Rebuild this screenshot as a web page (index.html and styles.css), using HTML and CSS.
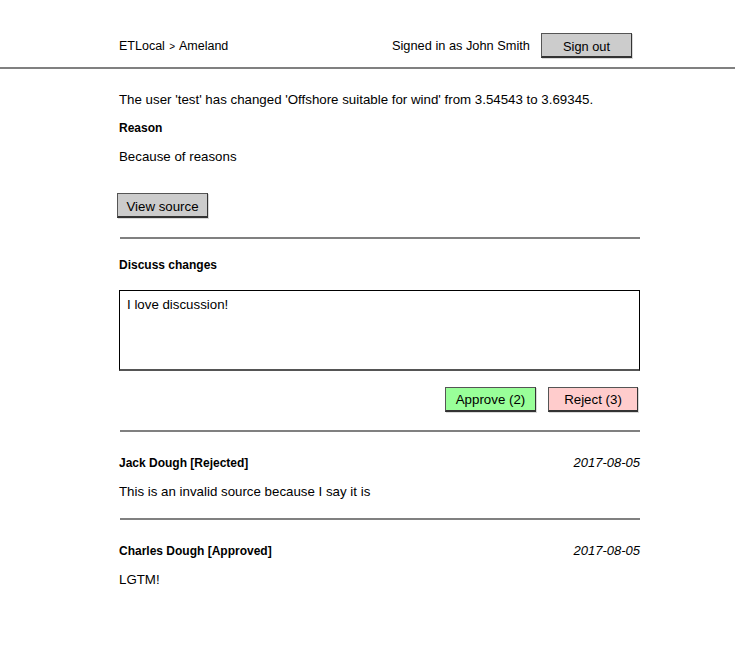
FILE: index.html
```html
<!DOCTYPE html>
<html>
<head>
<meta charset="utf-8">
<link rel="stylesheet" href="styles.css">
</head>
<body>
<header class="topbar">
  <div class="topbar-inner">
    <div class="crumbs">ETLocal <span class="sep">&gt;</span> Ameland</div>
    <div class="user">
      <span class="signed">Signed in as John Smith</span>
      <button class="btn btn-gray signout">Sign out</button>
    </div>
  </div>
</header>
<main class="content">
  <p class="change">The user 'test' has changed 'Offshore suitable for wind' from 3.54543 to 3.69345.</p>
  <p class="label">Reason</p>
  <p class="reason">Because of reasons</p>
  <button class="btn btn-gray viewsrc">View source</button>
  <hr class="rule">
  <p class="label discuss">Discuss changes</p>
  <div class="textarea">I love discussion!</div>
  <div class="actions">
    <button class="btn btn-green">Approve (2)</button>
    <button class="btn btn-red">Reject (3)</button>
  </div>
  <hr class="rule">
  <div class="comment">
    <div class="comment-head"><span class="who">Jack Dough [Rejected]</span><span class="date">2017-08-05</span></div>
    <p class="comment-body">This is an invalid source because I say it is</p>
  </div>
  <hr class="rule">
  <div class="comment">
    <div class="comment-head"><span class="who">Charles Dough [Approved]</span><span class="date">2017-08-05</span></div>
    <p class="comment-body">LGTM!</p>
  </div>
</main>
</body>
</html>
```
FILE: styles.css
```css
* { box-sizing: border-box; }
html, body { margin: 0; padding: 0; background: #fff; }
body {
  font-family: "Liberation Sans", Arial, sans-serif;
  font-size: 13.3px;
  color: #000;
}
.topbar {
  border-bottom: 2px solid #808080;
  height: 69px;
  padding-top: 33px;
}
.topbar-inner {
  width: 521px;
  margin-left: 119px;
  display: flex;
  justify-content: space-between;
  align-items: center;
}
.crumbs { padding-top: 1px; font-size: 12.5px; }
.sep { font-size: 10px; margin: 0 1px; }
.user { display: flex; align-items: center; gap: 11px; margin-right: 8px; font-size: 12.8px; }
.btn {
  font: inherit;
  color: #000;
  border: 1px solid #555;
  border-right-color: #333;
  border-bottom: 2px solid #333;
  height: 25px;
  padding: 0;
  box-shadow: 1px 1px 0 rgba(0,0,0,0.15);
}
.btn-gray { background: #cccccc; }
.signout { width: 91px; padding-top: 3px; }
.content {
  width: 521px;
  margin-left: 119px;
  padding-top: 23px;
}
p { margin: 0; }
.change { line-height: 16px; }
.label { font-weight: bold; margin-top: 12px; line-height: 16px; font-size: 12px; }
.reason { margin-top: 13px; line-height: 16px; }
.viewsrc { width: 91px; margin-top: 28px; margin-left: -2px; display: block; padding-top: 2px; }
.rule {
  margin: 19px 0 0 1px;
  border: 0;
  border-top: 2px solid #808080;
  height: 0;
}
.discuss { margin-top: 18px; }
.textarea {
  margin-top: 17px;
  height: 81px;
  border: 1px solid #000;
  border-bottom: 2px solid #555;
  padding: 7px 7px;
  color: #000;
  line-height: 14px;
}
.actions {
  display: flex;
  justify-content: flex-end;
  gap: 12px;
  margin-top: 16px;
  margin-right: 2px;
}
.btn-green { background: #99ff99; width: 91px; }
.btn-red { background: #ffcccc; width: 90px; }
.actions + .rule { margin-top: 18px; }
.comment { padding-top: 23px; padding-bottom: 18px; }
.comment + .rule { margin-top: 0; }
.comment-head { display: flex; justify-content: space-between; font-size: 12px; line-height: 16px; }
.who { font-weight: bold; }
.date { font-style: italic; font-size: 13px; }
.comment-body { margin-top: 13px; line-height: 16px; }
```
